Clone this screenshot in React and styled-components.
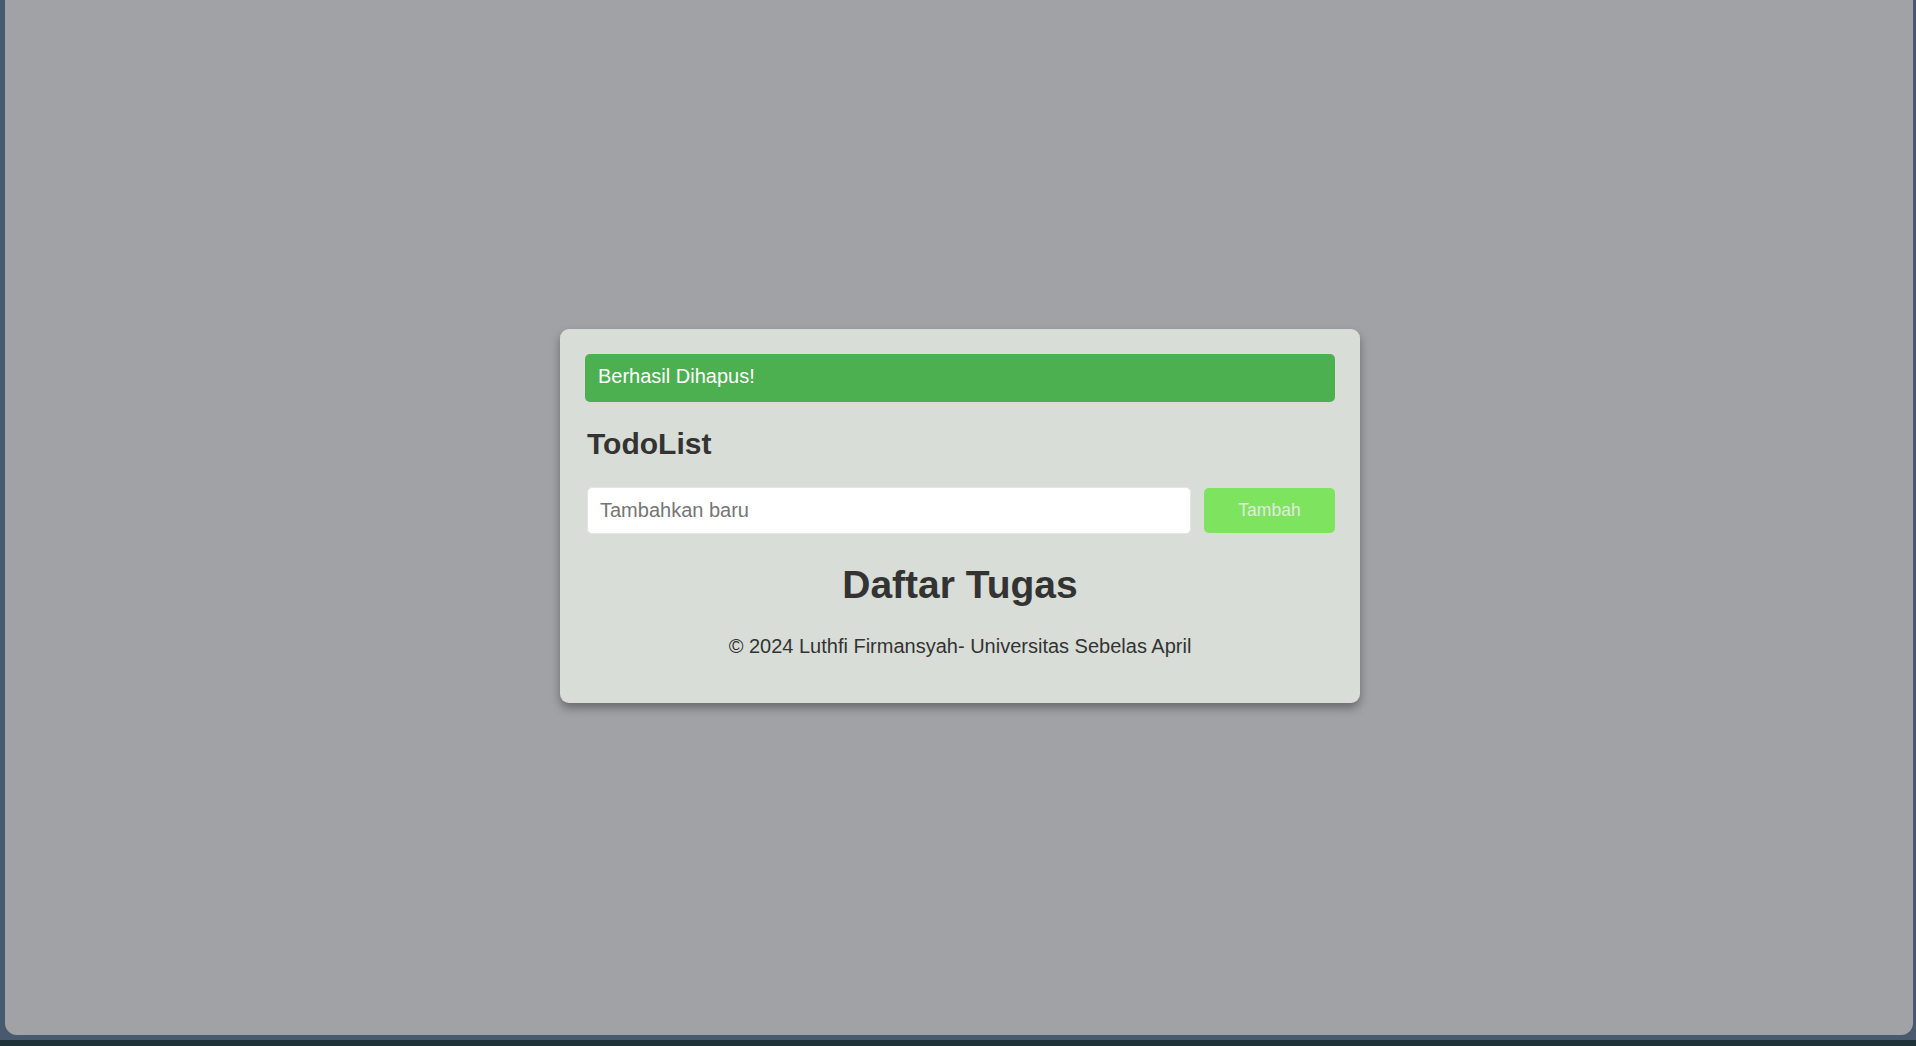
import React from 'react';
import styled, { createGlobalStyle } from 'styled-components';

const GlobalStyle = createGlobalStyle`
  html, body {
    margin: 0;
    padding: 0;
    height: 100%;
  }

  body {
    background: linear-gradient(to bottom, #4a5a6e 0, #4a5a6e 1040px, #1f3239 1040px);
    font-family: "Liberation Sans", Arial, sans-serif;
    overflow: hidden;
  }
`;

const Screen = styled.div`
  display: flex;
  align-items: center;
  justify-content: center;
  height: 1035px;
  margin: 0 3px 0 5px;
  background-color: #a1a2a6;
  border-radius: 0 0 12px 12px;
`;

const Card = styled.div`
  width: 750px;
  padding: 25px 25px 45px 25px;
  margin: 0 0 4px 2px;
  background-color: #d8ddd7;
  border-radius: 9px;
  box-shadow: 0 5px 10px rgba(0, 0, 0, 0.35);
  color: #333;
`;

const Alert = styled.div`
  height: 48px;
  display: flex;
  align-items: center;
  padding: 0 13px 2px 13px;
  box-sizing: border-box;
  background-color: #4caf50;
  color: #fff;
  border-radius: 5px;
  font-size: 20px;
`;

const Title = styled.h2`
  margin: 25px 0 26px 2px;
  font-size: 30px;
  font-weight: bold;
`;

const Form = styled.form`
  display: flex;
  flex-direction: row;
  align-items: center;
  gap: 13px;
  margin-left: 2px;
`;

const Input = styled.input`
  flex: 1;
  height: 47px;
  box-sizing: border-box;
  padding: 0 12px;
  border: 1px solid #e4e6e4;
  border-radius: 5px;
  background: #fff;
  font-family: "Liberation Sans", Arial, sans-serif;
  font-size: 20px;
  color: #333;
  outline: none;

  &::placeholder {
    color: #757575;
  }
`;

const Button = styled.button`
  width: 131px;
  height: 45px;
  border: none;
  border-radius: 5px;
  background-color: #7ee35f;
  color: #e2e9e0;
  font-family: "Liberation Sans", Arial, sans-serif;
  font-size: 17.5px;
  cursor: pointer;
`;

const ListTitle = styled.h1`
  margin: 29px 0 28px 0;
  text-align: center;
  font-size: 39px;
  font-weight: bold;
`;

const Footer = styled.p`
  margin: 0;
  text-align: center;
  font-size: 20px;
  color: #333;
`;

const App = () => {
  return (
    <>
      <GlobalStyle />
      <Screen>
        <Card>
          <Alert>Berhasil Dihapus!</Alert>
          <Title>TodoList</Title>
          <Form onSubmit={(e) => e.preventDefault()}>
            <Input type='text' placeholder='Tambahkan baru' />
            <Button type='submit'>Tambah</Button>
          </Form>
          <ListTitle>Daftar Tugas</ListTitle>
          <Footer>&copy; 2024 Luthfi Firmansyah- Universitas Sebelas April</Footer>
        </Card>
      </Screen>
    </>
  );
};

export default App;
